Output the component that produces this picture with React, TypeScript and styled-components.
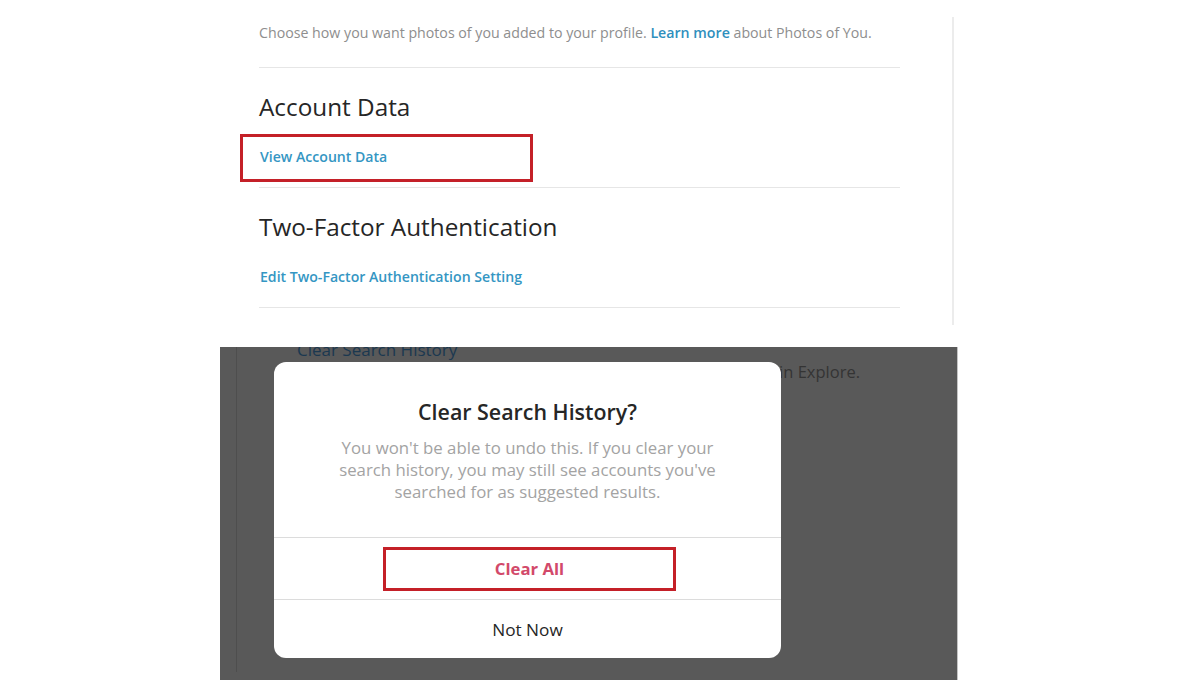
import React from "react";
import styled, { createGlobalStyle } from "styled-components";

const Global = createGlobalStyle`
  html, body { margin: 0; padding: 0; background: #ffffff; }
  body { font-family: "Open Sans", "Noto Sans", "Liberation Sans", sans-serif; }
  * { box-sizing: border-box; }
`;

const Page = styled.div`
  width: 1200px;
  height: 680px;
  overflow: hidden;
  background: #ffffff;
`;

const TopArea = styled.div`
  display: flex;
  height: 347px;
`;

const Content = styled.div`
  margin-left: 259px;
  width: 641px;
  padding-top: 23px;
`;

const Intro = styled.p`
  margin: 0;
  padding-bottom: 24px;
  border-bottom: 1px solid #e6e6e6;
  font-size: 14.2px;
  line-height: 20px;
  color: #8e8e8e;
  white-space: nowrap;
`;

const InlineLink = styled.a`
  color: #2f8fbd;
  font-weight: 600;
  text-decoration: none;
`;

const Section = styled.section`
  padding-top: 25px;
  border-bottom: 1px solid #e6e6e6;
`;

const Heading = styled.h2`
  margin: 0;
  font-size: 24.3px;
  line-height: 28px;
  font-weight: 400;
  color: #262626;
`;

const LinkRow = styled.div<{ $boxed?: boolean }>`
  display: flex;
  align-items: center;
  height: 48px;
  margin: ${(p) => (p.$boxed ? "13px 0 5px -19px" : "11px 0 7px 0")};
  padding: ${(p) => (p.$boxed ? "0 0 4px 17px" : "0 0 0 1px")};
  width: ${(p) => (p.$boxed ? "293px" : "auto")};
  border: ${(p) => (p.$boxed ? "3px solid #c42028" : "none")};
`;

const SettingLink = styled.a`
  color: #3496c3;
  font-size: 14.1px;
  font-weight: 600;
  text-decoration: none;
  white-space: nowrap;
`;

const VRule = styled.div`
  width: 2px;
  height: 308px;
  margin-top: 17px;
  margin-left: 52px;
  background: #ececec;
`;

const DarkArea = styled.div`
  position: relative;
  margin-left: 220px;
  width: 738px;
  height: 333px;
  background: #595959;
  border-right: 1px solid #c4c4c4;
  overflow: hidden;
`;

const Backdrop = styled.div`
  height: 100%;
  margin-left: 16px;
  padding: 0 97px 0 60px;
  border-left: 1px solid #4e4e4e;
`;

const BgLink = styled.div`
  margin-top: -8px;
  font-size: 17px;
  line-height: 22px;
  font-weight: 500;
  color: #1b3850;
  white-space: nowrap;
`;

const BgText = styled.div`
  font-size: 16.5px;
  line-height: 22px;
  color: #343434;
  text-align: right;
  white-space: nowrap;
`;

const Modal = styled.div`
  position: absolute;
  left: 54px;
  top: 15px;
  width: 507px;
  height: 296px;
  background: #ffffff;
  border-radius: 12px;
  display: flex;
  flex-direction: column;
  overflow: hidden;
`;

const ModalBody = styled.div`
  padding: 37px 60px 34px;
  text-align: center;
`;

const ModalTitle = styled.h3`
  margin: 0;
  font-size: 21.4px;
  line-height: 26px;
  font-weight: 600;
  color: #262626;
`;

const ModalText = styled.p`
  margin: 12px 0 0;
  font-size: 16.8px;
  line-height: 22px;
  color: #a3a3a3;
`;

const ActionRow = styled.div<{ $fill?: boolean }>`
  display: flex;
  align-items: center;
  justify-content: center;
  border-top: 1px solid #dcdcdc;
  height: ${(p) => (p.$fill ? "auto" : "62px")};
  flex: ${(p) => (p.$fill ? "1" : "none")};
`;

const ActionBox = styled.div<{ $boxed?: boolean }>`
  display: flex;
  align-items: center;
  justify-content: center;
  width: 293px;
  height: 44px;
  margin-left: 4px;
  border: ${(p) => (p.$boxed ? "3px solid #c42028" : "3px solid transparent")};
`;

const ActionButton = styled.button<{ $danger?: boolean }>`
  border: none;
  background: none;
  padding: 0;
  font-family: inherit;
  font-size: ${(p) => (p.$danger ? "16.7px" : "17.2px")};
  font-weight: ${(p) => (p.$danger ? 700 : 400)};
  color: ${(p) => (p.$danger ? "#d2496a" : "#262626")};
  cursor: pointer;
`;

export default function App() {
  return (
    <Page>
      <Global />
      <TopArea>
        <Content>
          <Intro>
            Choose how you want photos of you added to your profile.{" "}
            <InlineLink href="#">Learn more</InlineLink> about Photos of You.
          </Intro>
          <Section>
            <Heading>Account Data</Heading>
            <LinkRow $boxed>
              <SettingLink href="#">View Account Data</SettingLink>
            </LinkRow>
          </Section>
          <Section>
            <Heading>Two-Factor Authentication</Heading>
            <LinkRow>
              <SettingLink href="#">Edit Two-Factor Authentication Setting</SettingLink>
            </LinkRow>
          </Section>
        </Content>
        <VRule />
      </TopArea>
      <DarkArea>
        <Backdrop>
          <BgLink>Clear Search History</BgLink>
          <BgText>Clear accounts you've searched for in Explore.</BgText>
        </Backdrop>
        <Modal>
          <ModalBody>
            <ModalTitle>Clear Search History?</ModalTitle>
            <ModalText>
              You won't be able to undo this. If you clear your search history, you may still see
              accounts you've searched for as suggested results.
            </ModalText>
          </ModalBody>
          <ActionRow>
            <ActionBox $boxed>
              <ActionButton $danger>Clear All</ActionButton>
            </ActionBox>
          </ActionRow>
          <ActionRow $fill>
            <ActionButton>Not Now</ActionButton>
          </ActionRow>
        </Modal>
      </DarkArea>
    </Page>
  );
}
